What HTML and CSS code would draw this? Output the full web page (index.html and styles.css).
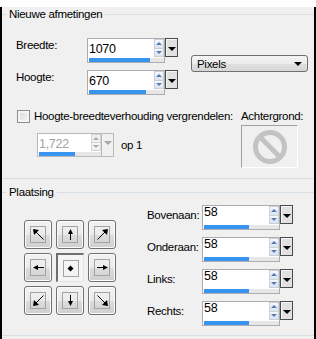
FILE: index.html
```html
<!DOCTYPE html>
<html lang="nl">
<head>
    <meta charset="UTF-8">
    <title>Nieuwe afmetingen</title>
    <link rel="stylesheet" href="styles.css">
</head>
<body>
    <div class="window">
        <section class="group group-size">
            <div class="group-title"><span>Nieuwe afmetingen</span></div>

            <div class="size-rows">
                <div class="size-fields">
                    <div class="field-row">
                        <span class="field-label">Breedte:</span>
                        <div class="spin">
                            <div class="spin-box">
                                <div class="spin-main">
                                    <span class="spin-value">1070</span>
                                    <span class="spin-arrows"><b class="up"></b><b class="down"></b></span>
                                </div>
                                <div class="spin-bar"><div class="spin-fill" style="width:61px"></div></div>
                            </div>
                            <button class="spin-drop"></button>
                        </div>
                    </div>
                    <div class="field-row">
                        <span class="field-label">Hoogte:</span>
                        <div class="spin">
                            <div class="spin-box">
                                <div class="spin-main">
                                    <span class="spin-value">670</span>
                                    <span class="spin-arrows"><b class="up"></b><b class="down"></b></span>
                                </div>
                                <div class="spin-bar"><div class="spin-fill" style="width:57px"></div></div>
                            </div>
                            <button class="spin-drop"></button>
                        </div>
                    </div>
                </div>
                <div class="combo"><span>Pixels</span><i class="combo-arrow"></i></div>
            </div>

            <div class="lock">
                <div class="lock-left">
                    <label class="check-row"><span class="checkbox"></span>Hoogte-breedteverhouding vergrendelen:</label>
                    <div class="ratio-row">
                        <div class="spin spin-disabled">
                            <div class="spin-box">
                                <div class="spin-main">
                                    <span class="spin-value">1,722</span>
                                    <span class="spin-arrows"><b class="up"></b><b class="down"></b></span>
                                </div>
                                <div class="spin-bar"><div class="spin-fill" style="width:36px"></div></div>
                            </div>
                            <button class="spin-drop"></button>
                        </div>
                        <span class="ratio-suffix">op 1</span>
                    </div>
                </div>
                <div class="bg-col">
                    <div class="bg-label">Achtergrond:</div>
                    <div class="bg-swatch">
                        <svg width="36" height="36" viewBox="0 0 36 36">
                            <circle cx="18" cy="18" r="14.5" fill="none" stroke="#c3c3c3" stroke-width="5"/>
                            <line x1="8" y1="8" x2="28" y2="28" stroke="#c3c3c3" stroke-width="5"/>
                        </svg>
                    </div>
                </div>
            </div>
        </section>

        <section class="group group-place">
            <div class="group-title"><span>Plaatsing</span></div>

            <div class="place-body">
                <div class="nudge-grid">
                    <button class="nudge"><span class="nudge-icon"><svg width="13" height="13" viewBox="0 0 13 13"><path d="M11.5 11.5L3 3" stroke="#000"/><polygon points="1,1 7,2 2,7"/></svg></span></button>
                    <button class="nudge"><span class="nudge-icon"><svg width="13" height="13" viewBox="0 0 13 13"><path d="M6.5 12V3" stroke="#000"/><polygon points="6.5,1 4,6 9,6"/></svg></span></button>
                    <button class="nudge"><span class="nudge-icon"><svg width="13" height="13" viewBox="0 0 13 13"><g transform="rotate(90 6.5 6.5)"><path d="M11.5 11.5L3 3" stroke="#000"/><polygon points="1,1 7,2 2,7"/></g></svg></span></button>

                    <button class="nudge"><span class="nudge-icon"><svg width="13" height="13" viewBox="0 0 13 13"><g transform="rotate(-90 6.5 6.5)"><path d="M6.5 12V3" stroke="#000"/><polygon points="6.5,1 4,6 9,6"/></g></svg></span></button>
                    <button class="nudge is-down"><span class="nudge-icon"><svg width="13" height="13" viewBox="0 0 13 13"><polygon points="6.5,3.5 9.5,6.5 6.5,9.5 3.5,6.5"/></svg></span></button>
                    <button class="nudge"><span class="nudge-icon"><svg width="13" height="13" viewBox="0 0 13 13"><g transform="rotate(90 6.5 6.5)"><path d="M6.5 12V3" stroke="#000"/><polygon points="6.5,1 4,6 9,6"/></g></svg></span></button>

                    <button class="nudge"><span class="nudge-icon"><svg width="13" height="13" viewBox="0 0 13 13"><g transform="rotate(-90 6.5 6.5)"><path d="M11.5 11.5L3 3" stroke="#000"/><polygon points="1,1 7,2 2,7"/></g></svg></span></button>
                    <button class="nudge"><span class="nudge-icon"><svg width="13" height="13" viewBox="0 0 13 13"><g transform="rotate(180 6.5 6.5)"><path d="M6.5 12V3" stroke="#000"/><polygon points="6.5,1 4,6 9,6"/></g></svg></span></button>
                    <button class="nudge"><span class="nudge-icon"><svg width="13" height="13" viewBox="0 0 13 13"><g transform="rotate(180 6.5 6.5)"><path d="M11.5 11.5L3 3" stroke="#000"/><polygon points="1,1 7,2 2,7"/></g></svg></span></button>
                </div>

                <div class="place-fields">
                    <div class="field-row">
                        <span class="field-label">Bovenaan:</span>
                        <div class="spin">
                            <div class="spin-box">
                                <div class="spin-main">
                                    <span class="spin-value">58</span>
                                    <span class="spin-arrows"><b class="up"></b><b class="down"></b></span>
                                </div>
                                <div class="spin-bar"><div class="spin-fill" style="width:45px"></div></div>
                            </div>
                            <button class="spin-drop"></button>
                        </div>
                    </div>
                    <div class="field-row">
                        <span class="field-label">Onderaan:</span>
                        <div class="spin">
                            <div class="spin-box">
                                <div class="spin-main">
                                    <span class="spin-value">58</span>
                                    <span class="spin-arrows"><b class="up"></b><b class="down"></b></span>
                                </div>
                                <div class="spin-bar"><div class="spin-fill" style="width:45px"></div></div>
                            </div>
                            <button class="spin-drop"></button>
                        </div>
                    </div>
                    <div class="field-row">
                        <span class="field-label">Links:</span>
                        <div class="spin">
                            <div class="spin-box">
                                <div class="spin-main">
                                    <span class="spin-value">58</span>
                                    <span class="spin-arrows"><b class="up"></b><b class="down"></b></span>
                                </div>
                                <div class="spin-bar"><div class="spin-fill" style="width:45px"></div></div>
                            </div>
                            <button class="spin-drop"></button>
                        </div>
                    </div>
                    <div class="field-row">
                        <span class="field-label">Rechts:</span>
                        <div class="spin">
                            <div class="spin-box">
                                <div class="spin-main">
                                    <span class="spin-value">58</span>
                                    <span class="spin-arrows"><b class="up"></b><b class="down"></b></span>
                                </div>
                                <div class="spin-bar"><div class="spin-fill" style="width:45px"></div></div>
                            </div>
                            <button class="spin-drop"></button>
                        </div>
                    </div>
                </div>
            </div>
        </section>
    </div>
</body>
</html>
```

FILE: styles.css
```css
body {
    margin: 0;
    font-family: "Liberation Sans", Arial, sans-serif;
    font-size: 11.5px;
    letter-spacing: -0.3px;
    color: #000;
}

.window {
    width: 316px;
    height: 339px;
    box-sizing: border-box;
    background-color: #f0f0f0;
    border: 2px solid #000;
    border-top: none;
}

/* Groepen */
.group {
    box-sizing: border-box;
    border-bottom: 1px solid #d5dfe5;
}

.group-size {
    margin-top: 7px;
    height: 172px;
}

.group-place {
    margin-top: 6px;
    height: 151px;
}

.group-title {
    display: flex;
    align-items: center;
    height: 14px;
    line-height: 14px;
}

.group-title::before {
    content: "";
    width: 5px;
    height: 1px;
    margin-right: 2px;
    background-color: #d5dfe5;
}

.group-title::after {
    content: "";
    flex: 1;
    height: 1px;
    margin-left: 3px;
    background-color: #d5dfe5;
}

/* Afmetingen */
.size-rows {
    display: flex;
    margin-top: 17px;
    padding-left: 14px;
}

.size-fields {
    display: flex;
    flex-direction: column;
    gap: 7px;
}

.field-row {
    display: flex;
    align-items: flex-start;
}

.field-label {
    width: 71px;
    line-height: 14px;
}

.combo {
    display: flex;
    align-items: center;
    justify-content: space-between;
    box-sizing: border-box;
    width: 117px;
    height: 17px;
    margin-left: 13px;
    margin-top: 17px;
    padding: 0 5px 0 5px;
    border: 1px solid #707070;
    border-radius: 3px;
    background: linear-gradient(#f4f4f4, #ececec 50%, #e0e0e0 50%, #d6d6d6);
    line-height: 14px;
}

.combo-arrow {
    width: 0;
    height: 0;
    border-left: 4px solid transparent;
    border-right: 4px solid transparent;
    border-top: 4px solid #000;
}

/* Spinvelden */
.spin {
    display: flex;
    align-items: flex-start;
}

.spin-box {
    display: flex;
    flex-direction: column;
    box-sizing: border-box;
    width: 78px;
    height: 25px;
    border: 1px solid #abadb3;
    background-color: #fff;
}

.spin-main {
    display: flex;
    height: 18px;
}

.spin-value {
    flex: 1;
    padding: 3px 0 0 1px;
    line-height: 14px;
    font-size: 12.5px;
}

.spin-arrows {
    display: flex;
    flex-direction: column;
    width: 10px;
}

.spin-arrows b {
    flex: 1;
    display: flex;
    align-items: center;
    justify-content: center;
    border: 1px solid #c9d0da;
    background: linear-gradient(#f6f8fb, #dce3ec);
}

.spin-arrows b.up {
    border-bottom: none;
}

.spin-arrows b::before {
    content: "";
    width: 0;
    height: 0;
    border-left: 3px solid transparent;
    border-right: 3px solid transparent;
}

.spin-arrows b.up::before {
    border-bottom: 3px solid #5a78b8;
}

.spin-arrows b.down::before {
    border-top: 3px solid #5a78b8;
}

.spin-bar {
    height: 4px;
    margin: 1px 0 0 1px;
    background-color: #e6e6e6;
}

.spin-fill {
    height: 100%;
    background-color: #3794ef;
}

.spin-drop {
    display: flex;
    align-items: center;
    justify-content: center;
    box-sizing: border-box;
    width: 13px;
    height: 19px;
    padding: 0;
    border: 1px solid #4a4a4a;
    background-color: #e1e1e1;
    box-shadow: inset 1px 1px 0 #f8f8f8;
}

.spin-drop::before {
    content: "";
    width: 0;
    height: 0;
    margin-top: 2px;
    border-left: 4px solid transparent;
    border-right: 4px solid transparent;
    border-top: 4px solid #000;
}

/* Vergrendelen */
.lock {
    display: flex;
    margin-top: 15px;
    padding-left: 15px;
}

.lock-left {
    width: 224px;
    flex: none;
}

.check-row {
    display: flex;
    align-items: center;
    gap: 4px;
    height: 13px;
    line-height: 13px;
    white-space: nowrap;
}

.checkbox {
    box-sizing: border-box;
    width: 13px;
    height: 13px;
    border: 1px solid #8e8f8f;
    background: linear-gradient(135deg, #d8d8d8, #f7f7f7);
    box-shadow: inset 0 0 0 2px #f4f4f4;
}

.ratio-row {
    display: flex;
    align-items: center;
    margin-top: 10px;
    padding-left: 20px;
}

.spin-disabled .spin-box {
    width: 64px;
    height: 24px;
    border-color: #b8b8b8;
    border-right: none;
}

.spin-disabled .spin-value {
    color: #a3a3a3;
}

.spin-disabled .spin-arrows b {
    border-color: #d4d4d4;
    background: #f2f2f2;
}

.spin-disabled .spin-arrows b.up::before {
    border-bottom-color: #a8a8a8;
}

.spin-disabled .spin-arrows b.down::before {
    border-top-color: #a8a8a8;
}

.spin-disabled .spin-drop {
    height: 24px;
    align-items: flex-start;
    padding-top: 5px;
    border-color: #b8b8b8;
    background-color: #f0f0f0;
    box-shadow: none;
}

.spin-disabled .spin-drop::before {
    border-top-color: #a8a8a8;
}

.ratio-suffix {
    margin-left: 7px;
}

.bg-label {
    line-height: 13px;
}

.bg-swatch {
    display: flex;
    align-items: center;
    justify-content: center;
    box-sizing: border-box;
    width: 57px;
    height: 43px;
    margin-top: 2px;
    border: 1px solid;
    border-color: #a0a0a0 #fff #fff #a0a0a0;
}

/* Plaatsing */
.place-body {
    display: flex;
    padding-left: 22px;
}

.nudge-grid {
    display: grid;
    grid-template-columns: repeat(3, 28px);
    grid-auto-rows: 29px;
    gap: 4px;
    margin-top: 21px;
}

.nudge {
    display: flex;
    align-items: center;
    justify-content: center;
    box-sizing: border-box;
    padding: 0;
    border: 1px solid #707070;
    border-radius: 3px;
    background: linear-gradient(#f2f2f2, #ebebeb 50%, #dddddd 50%, #cfcfcf);
    box-shadow: inset 0 0 0 1px #fcfcfc;
}

.nudge.is-down {
    border-radius: 0;
    border-width: 2px 1px 1px 2px;
    border-color: #6f6f6f #e3e3e3 #e3e3e3 #6f6f6f;
    background: #f4f4f4;
    box-shadow: none;
}

.nudge-icon {
    display: flex;
    align-items: center;
    justify-content: center;
    box-sizing: border-box;
    width: 16px;
    height: 17px;
    border: 1px solid #a3a3a3;
}

.place-fields {
    display: flex;
    flex-direction: column;
    gap: 7px;
    margin-left: 31px;
    margin-top: 6px;
}

.place-fields .field-label {
    width: 55px;
    padding-top: 3px;
}

.place-fields .spin-value {
    padding-top: 0;
    line-height: 13px;
}
```
